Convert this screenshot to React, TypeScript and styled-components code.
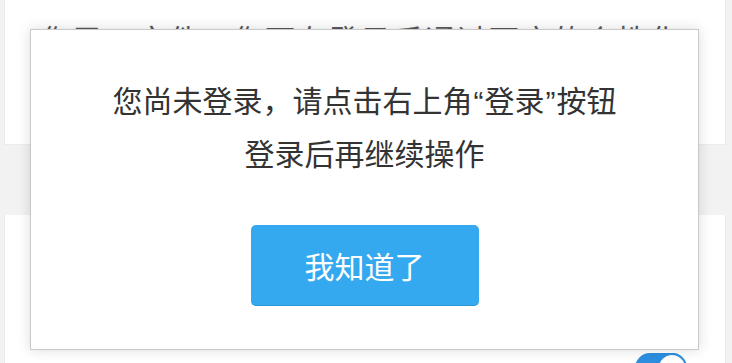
import { FC } from 'react';
import styled, { createGlobalStyle } from 'styled-components';

const GlobalStyle = createGlobalStyle`
  html, body {
    margin: 0;
    padding: 0;
    background: #f2f2f2;
    font-family: 'Noto Sans CJK SC', 'Noto Sans', sans-serif;
    overflow: hidden;
  }
`;

const Page = styled.div`
  position: relative;
  width: 732px;
  height: 363px;
  overflow: hidden;
`;

const Card = styled.section<{ $height?: number }>`
  margin: 0 6px 0 4px;
  background: #fff;
  border: 1px solid #ececec;
  border-top: 0;
  box-sizing: border-box;
  height: ${p => (p.$height ? `${p.$height}px` : 'auto')};
`;

const Spacer = styled.div`
  height: 70px;
`;

const Notice = styled.p`
  margin: 0;
  padding: 18px 0 0 36px;
  font-size: 30px;
  line-height: 40px;
  letter-spacing: 2px;
  color: #5a5a5a;
  white-space: nowrap;
`;

const SectionTitle = styled.h3`
  margin: 0;
  padding: 24px 36px 0;
  font-size: 28px;
  font-weight: normal;
  line-height: 40px;
  color: #333;
`;

const SettingRow = styled.div`
  display: flex;
  align-items: flex-start;
  justify-content: space-between;
  padding: 74px 38px 0 36px;
`;

const SettingLabel = styled.span`
  font-size: 26px;
  line-height: 36px;
  color: #666;
  padding-top: 6px;
`;

const Toggle = styled.div`
  position: relative;
  width: 52px;
  height: 30px;
  border-radius: 15px;
  background: #2d8ee0;
`;

const Knob = styled.div`
  position: absolute;
  right: 0;
  top: 0;
  width: 26px;
  height: 26px;
  border-radius: 50%;
  background: #fff;
  border: 2px solid #2d8ee0;
`;

const Modal = styled.div`
  position: absolute;
  left: 30px;
  top: 29px;
  width: 669px;
  height: 321px;
  box-sizing: border-box;
  background: #fff;
  border: 1px solid #c9c9c9;
  box-shadow: 0 0 12px rgba(0, 0, 0, 0.14);
  display: flex;
  flex-direction: column;
  align-items: center;
  padding-top: 44px;
`;

const Message = styled.p`
  margin: 0;
  font-size: 30px;
  line-height: 50px;
  color: #333;
  text-align: center;
`;

const Quote = styled.span`
  font-family: 'Liberation Sans', sans-serif;
  margin: 0 1px;
`;

const ConfirmButton = styled.button`
  margin-top: 48px;
  width: 228px;
  height: 81px;
  border: 0;
  border-bottom: 1px solid #2a94d6;
  border-radius: 5px;
  background: #35a9ef;
  color: #fff;
  font-family: inherit;
  font-size: 30px;
  cursor: pointer;
`;

const App: FC = () => {
  return (
    <Page>
      <GlobalStyle />
      <Card $height={145}>
        <Notice>您已二文件，您可在登录后通过下方的个性化</Notice>
      </Card>
      <Spacer />
      <Card $height={160}>
        <SectionTitle>个性化服务</SectionTitle>
        <SettingRow>
          <SettingLabel>同步我的文件</SettingLabel>
          <Toggle>
            <Knob />
          </Toggle>
        </SettingRow>
      </Card>
      <Modal>
        <Message>
          您尚未登录，请点击右上角<Quote>“</Quote>登录<Quote>”</Quote>按钮
          <br />
          登录后再继续操作
        </Message>
        <ConfirmButton>我知道了</ConfirmButton>
      </Modal>
    </Page>
  );
};

export default App;
